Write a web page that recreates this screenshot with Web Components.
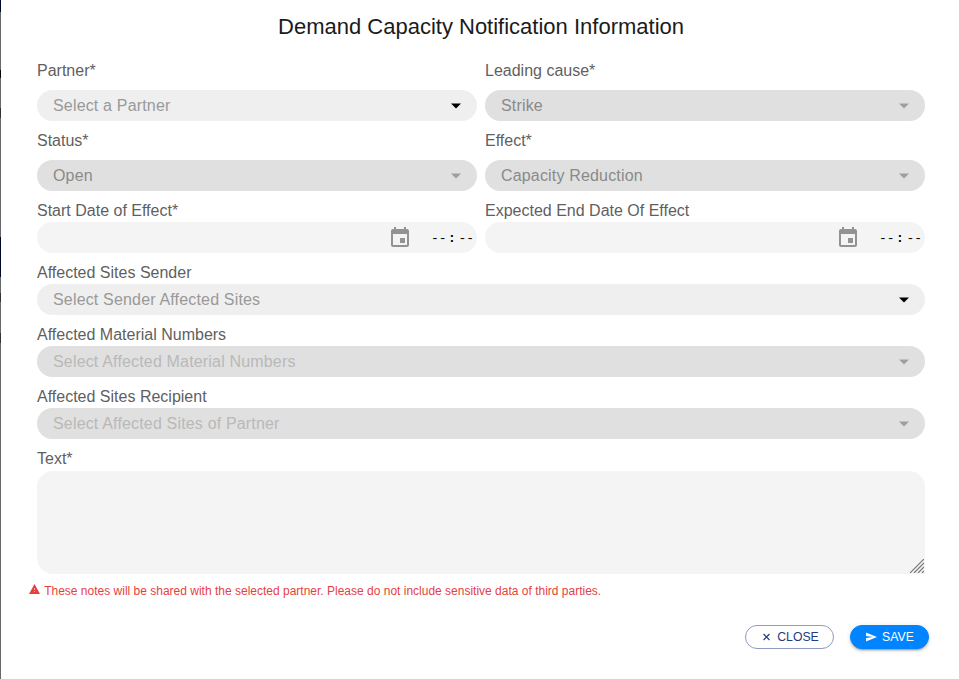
<!DOCTYPE html>
<html lang="en"><head><meta charset="utf-8"><title>Demand Capacity Notification</title>
<style>html,body{margin:0;height:100%;overflow:hidden;background:#fff;font-family:"Liberation Sans",Arial,sans-serif}</style></head>
<body>
<notification-dialog></notification-dialog>
<script>
const define=(name,html)=>{
  const t=document.createElement('template');t.innerHTML=html;
  customElements.define(name,class extends HTMLElement{
    connectedCallback(){
      if(this.shadowRoot)return;
      this.attachShadow({mode:'open'}).append(t.content.cloneNode(true));
    }
  });
};
define('form-field',`<style>
:host{display:block;min-width:0}
.label{box-sizing:border-box;height:24px;padding-top:1px;line-height:24px;font-size:16px;color:#5f5f5f;white-space:nowrap;margin-bottom:var(--label-gap,0)}
</style><div class="label"><slot name="label"></slot></div><slot></slot>`);
define('select-box',`<style>
:host{display:flex;box-sizing:border-box;height:31px;border-radius:16px;background:#efefef;color:#999;padding:0 15px 0 16px;align-items:center;justify-content:space-between;font-size:16px;line-height:30px;letter-spacing:.17px;--arrow:#000}
:host([disabled]){background:#e0e0e0;color:#8a8a8a;--arrow:#9e9e9e}
:host([disabled][empty]){color:#b9b9b9}
span{white-space:nowrap}
svg{display:block;width:12px;height:6px;margin-top:1px;fill:var(--arrow)}
</style><span><slot></slot></span><svg viewBox="0 0 12 6"><path d="M1 .5h10l-5 5z"/></svg>`);
define('date-time-box',`<style>
:host{display:flex;box-sizing:border-box;height:31px;border-radius:16px;background:#f4f4f4;align-items:center;justify-content:flex-end;padding-right:2px}
svg{display:block;width:24px;height:24px;fill:#929292;margin-right:19px}
.time{display:flex;color:#000;width:44px;font:13px/16px "Liberation Mono",monospace;letter-spacing:-.1px;white-space:pre;padding-top:3px}
b{margin:0 3px 0 1.500px}
</style><svg viewBox="0 0 24 24"><path d="M17 12h-5v5h5v-5zM16 1v2H8V1H6v2H5c-1.110 0-1.990.9-1.990 2L3 19c0 1.100.890 2 2 2h14c1.100 0 2-.9 2-2V5c0-1.100-.9-2-2-2h-1V1h-2zm3 18H5V8h14v11z"/></svg><span class="time"><span>--</span><b>:</b><span>--</span></span>`);
define('text-box',`<style>
:host{display:flex;height:103px;margin-top:1px;border-radius:16px 16px 0 16px;background:#f4f4f4;align-items:flex-end;justify-content:flex-end}
svg{display:block;width:14px;height:14px;margin:0 1px 1px 0;stroke:#777;stroke-width:1.2;fill:none}
</style><svg viewBox="0 0 14 14"><path d="M0 14 14 0M4 14 14 4M8 14l6-6M12 14l2-2"/></svg>`);
define('warning-note',`<style>
:host{display:flex;align-items:center;font-size:12px;line-height:20px;color:#e53f3f;white-space:nowrap;gap:4px}
svg{display:block;width:11px;height:10px;margin-top:-4px}
</style><svg viewBox="0 0 11 10"><path fill="#e53f3f" d="M5.500 0 11 10H0z"/><path fill="#fff" opacity=".6" d="M5 4h1v2H5zM5 7h1v1H5z"/></svg><span><slot></slot></span>`);
define('action-button',`<style>
:host{display:flex;box-sizing:border-box;height:24px;border:1px solid #8f9bc4;border-radius:12px;color:#233b80;align-items:center;justify-content:center;font-size:12.250px;line-height:22px;width:89px;gap:6px;padding-left:2px}
:host([primary]){width:79px;border-color:#0084ff;background:#0084ff;color:#fff;gap:5px;padding-left:1px;box-shadow:0 3px 1px -2px rgba(0,0,0,.2),0 2px 2px rgba(0,0,0,.14),0 1px 5px rgba(0,0,0,.12)}
</style><slot name="icon"></slot><span><slot></slot></span>`);
define('page-edge',`<style>
:host{display:block;width:1px;height:679px;flex:none;background:linear-gradient(#000b2b 0 12px,#66686b 12px 70px,#080808 70px 78px,#66686b 78px 108px,#333 108px 118px,#66686b 118px 237px,#000b2b 237px 277px,#66686b 277px 293px,#333 293px 302px,#66686b 302px 333px,#333 333px 343px,#66686b 343px)}
</style>`);
define('notification-dialog',`<style>
:host{display:flex;width:959px;height:679px}
main{flex:1;min-width:0;display:flex;flex-direction:column}
h1{font-size:22px;font-weight:400;line-height:30px;margin:12px 0 16px;text-align:center;color:#1b1b1b;padding-left:2px}
.grid{display:grid;grid-template-columns:440px 440px;column-gap:8px;row-gap:7px;padding-left:36px}
.wide{grid-column:1/3}
.tall{--label-gap:8px}
warning-note{margin:7px 0 0 28.200px}
footer{display:flex;justify-content:flex-end;gap:16px;padding:24px 30px 0 0}
svg{display:block}
</style><page-edge></page-edge><main>
<h1>Demand Capacity Notification Information</h1>
<div class="grid">
<form-field class="tall"><span slot="label">Partner*</span><select-box>Select a Partner</select-box></form-field>
<form-field class="tall"><span slot="label">Leading cause*</span><select-box disabled>Strike</select-box></form-field>
<form-field class="tall"><span slot="label">Status*</span><select-box disabled>Open</select-box></form-field>
<form-field class="tall"><span slot="label">Effect*</span><select-box disabled>Capacity Reduction</select-box></form-field>
<form-field><span slot="label">Start Date of Effect*</span><date-time-box></date-time-box></form-field>
<form-field><span slot="label">Expected End Date Of Effect</span><date-time-box></date-time-box></form-field>
<form-field class="wide"><span slot="label">Affected Sites Sender</span><select-box>Select Sender Affected Sites</select-box></form-field>
<form-field class="wide"><span slot="label">Affected Material Numbers</span><select-box disabled empty>Select Affected Material Numbers</select-box></form-field>
<form-field class="wide"><span slot="label">Affected Sites Recipient</span><select-box disabled empty>Select Affected Sites of Partner</select-box></form-field>
<form-field class="wide"><span slot="label">Text*</span><text-box></text-box></form-field>
</div>
<warning-note>These notes will be shared with the selected partner. Please do not include sensitive data of third parties.</warning-note>
<footer>
<action-button><svg slot="icon" width="9" height="10" viewBox="0 0 9 10" fill="none" stroke="#233b80" stroke-width="1.100"><path d="M1.500 2l6 6M7.500 2l-6 6"/></svg>CLOSE</action-button>
<action-button primary><svg slot="icon" width="11" height="10" viewBox="0 0 11 10" fill="#fff"><path d="M0 .5 11 5 0 9.500V6l7-1-7-1z"/></svg>SAVE</action-button>
</footer></main>`);
</script>
</body></html>
